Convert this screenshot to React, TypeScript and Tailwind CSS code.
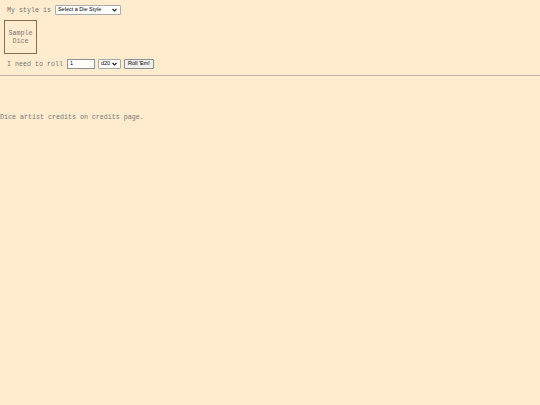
import React from "react";

// Small native-looking dropdown: white box, grey border, chevron at the right.
function Dropdown({ label, width }: { label: string; width: string }) {
  return (
    <div
      className={`flex h-[10px] ${width} items-center justify-between rounded-[1px] border border-[#a9a9a9] bg-white pl-[2px] pr-[3px] font-['Liberation_Sans',sans-serif] text-[5.5px] leading-none text-black`}
    >
      <span>{label}</span>
      <svg width="5" height="4" viewBox="0 0 10 8" className="shrink-0">
        <path d="M1 2 L5 6 L9 2" fill="none" stroke="#222" strokeWidth="2.4" />
      </svg>
    </div>
  );
}

export default function App() {
  return (
    <div className="min-h-[405px] w-full bg-[#ffebcd] font-['Liberation_Mono',monospace] text-[6.67px] leading-none text-[#777]">
      <div className="flex items-center pl-[7px] pt-[5px]">
        <span className="whitespace-pre">My style is </span>
        <Dropdown label="Select a Die Style" width="w-[66px]" />
      </div>

      <div className="ml-[4px] mt-[5px] flex h-[34px] w-[33px] flex-col items-center justify-center border border-[#8a6d4e] text-center leading-[8px]">
        <span>Sample</span>
        <span>Dice</span>
      </div>

      <div className="mt-[5px] flex items-center pl-[7px]">
        <span className="whitespace-pre">I need to roll </span>
        <div className="flex h-[10px] w-[28px] items-center border border-[#8f8f8f] bg-white pl-[2px] font-['Liberation_Sans',sans-serif] text-[5.5px] text-black">
          1
        </div>
        <div className="ml-[3px]">
          <Dropdown label="d20" width="w-[23px]" />
        </div>
        <div className="ml-[3px] flex h-[10px] items-center rounded-[1px] border border-[#8f8f8f] bg-[#efefef] px-[3px] font-['Liberation_Sans',sans-serif] text-[5.5px] text-black">
          Roll 'Em!
        </div>
      </div>

      <div className="mt-[6px] h-[2px] w-full border-t border-[#c2b3a3] border-b-[#e8d7bd]" />

      <div className="mt-[37px]">Dice artist credits on credits page.</div>
    </div>
  );
}
